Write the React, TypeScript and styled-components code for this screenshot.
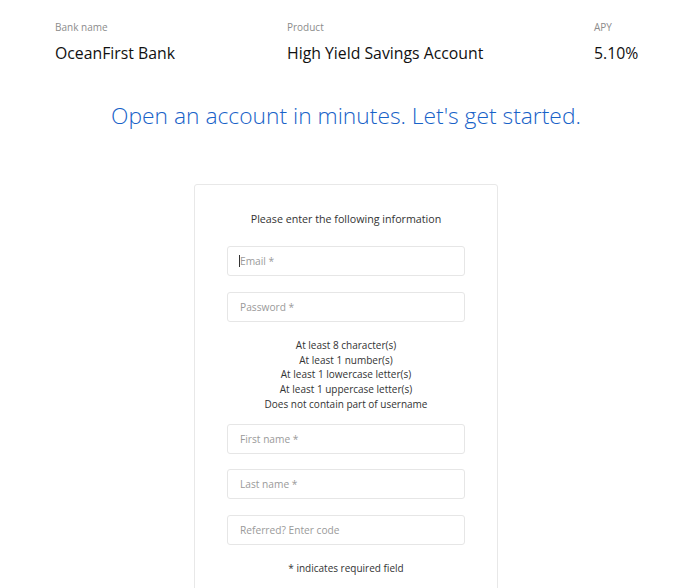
import React from 'react';
import styled, { createGlobalStyle } from 'styled-components';

const GlobalStyle = createGlobalStyle`
  html, body {
    margin: 0;
    padding: 0;
    background: #ffffff;
    font-family: "Open Sans", "Noto Sans", Arial, sans-serif;
    color: #1a1a1a;
    overflow: hidden;
  }
  * { box-sizing: border-box; }
`;

const Page = styled.div`
  padding: 20px 0 0 0;
`;

const Summary = styled.div`
  display: grid;
  grid-template-columns: 232px 307px auto;
  padding-left: 55px;
`;

const SummaryItem = styled.div`
  display: flex;
  flex-direction: column;
  gap: 8px;
`;

const SummaryLabel = styled.span`
  font-size: 10px;
  line-height: 14px;
  color: #8c8c8c;
`;

const SummaryValue = styled.span`
  font-size: 15.8px;
  line-height: 22px;
  color: #111111;
`;

const Headline = styled.h1`
  margin: 37px 0 0 12px;
  text-align: center;
  font-size: 22.8px;
  line-height: 30px;
  font-weight: 300;
  color: #1862c8;
`;

const Card = styled.form`
  width: 304px;
  margin: 53px 0 0 194px;
  padding: 27px 32px 20px;
  border: 1px solid #e8e8e8;
  border-radius: 3px;
  display: flex;
  flex-direction: column;
  align-items: stretch;
`;

const Intro = styled.p`
  margin: 0 0 19px;
  text-align: center;
  font-size: 10.7px;
  line-height: 15px;
  color: #333333;
`;

const Field = styled.div<{ $gap?: number }>`
  position: relative;
  margin-bottom: ${(p) => p.$gap ?? 16}px;
`;

const Input = styled.input`
  display: block;
  width: 100%;
  height: 30px;
  padding: 0 12px;
  border: 1px solid #e6e6e6;
  border-radius: 3px;
  font-family: inherit;
  font-size: 10.2px;
  color: #333333;
  background: #ffffff;
  outline: none;

  &::placeholder {
    color: #9a9a9a;
  }
`;

const Caret = styled.span`
  position: absolute;
  left: 12px;
  top: 9px;
  width: 1px;
  height: 12px;
  background: #333333;
`;

const Rules = styled.ul`
  list-style: none;
  margin: 0 0 12px;
  padding: 0;
  text-align: center;
  font-size: 10px;
  line-height: 14.7px;
  color: #333333;
`;

const Footnote = styled.p`
  margin: 16px 0 0;
  text-align: center;
  font-size: 10px;
  line-height: 15px;
  color: #333333;
`;

const summary = [
  { label: 'Bank name', value: 'OceanFirst Bank' },
  { label: 'Product', value: 'High Yield Savings Account' },
  { label: 'APY', value: '5.10%' },
];

const rules = [
  'At least 8 character(s)',
  'At least 1 number(s)',
  'At least 1 lowercase letter(s)',
  'At least 1 uppercase letter(s)',
  'Does not contain part of username',
];

export default function App() {
  return (
    <>
      <GlobalStyle />
      <Page>
        <Summary>
          {summary.map((s) => (
            <SummaryItem key={s.label}>
              <SummaryLabel>{s.label}</SummaryLabel>
              <SummaryValue>{s.value}</SummaryValue>
            </SummaryItem>
          ))}
        </Summary>

        <Headline>Open an account in minutes. Let's get started.</Headline>

        <Card onSubmit={(e) => e.preventDefault()}>
          <Intro>Please enter the following information</Intro>
          <Field>
            <Input type="email" placeholder="Email *" />
            <Caret />
          </Field>
          <Field $gap={16}>
            <Input type="password" placeholder="Password *" />
          </Field>
          <Rules>
            {rules.map((r) => (
              <li key={r}>{r}</li>
            ))}
          </Rules>
          <Field $gap={15}>
            <Input placeholder="First name *" />
          </Field>
          <Field $gap={16}>
            <Input placeholder="Last name *" />
          </Field>
          <Field $gap={0}>
            <Input placeholder="Referred? Enter code" />
          </Field>
          <Footnote>* indicates required field</Footnote>
        </Card>
      </Page>
    </>
  );
}
